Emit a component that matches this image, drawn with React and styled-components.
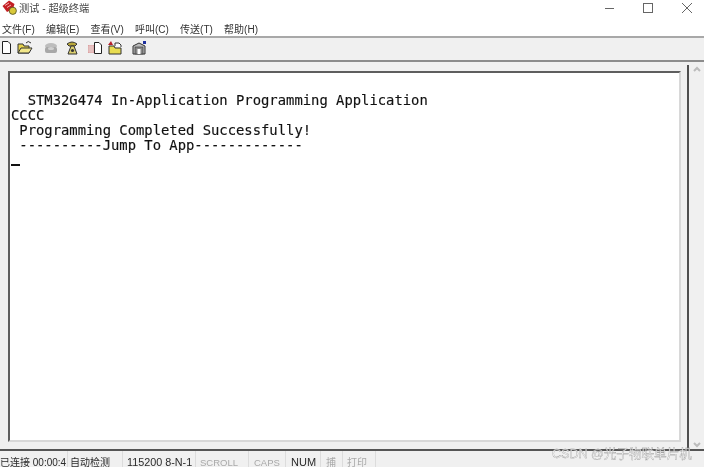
import React from "react";
import styled, { createGlobalStyle } from "styled-components";

const Global = createGlobalStyle`
  html, body { margin: 0; padding: 0; background: #f0f0f0; overflow: hidden; }
  #root { width: 704px; height: 467px; }
`;
const UI = `"Liberation Sans", "Noto Sans CJK SC", sans-serif`;

const Win = styled.div`
  position: relative; width: 704px; height: 467px; overflow: hidden;
  display: flex; flex-direction: column;
  background: #f0f0f0; font-family: ${UI}; color: #333;
  filter: blur(0.35px);
`;
const TitleBar = styled.div`
  height: 20px; flex: none; background: #fff; display: flex; align-items: center;
  padding-left: 2px; font-size: 10.2px; color: #444;
`;
const TitleText = styled.span`margin-left: 2px; margin-top: -5px;`;
const AppLogo = styled.svg`width: 15px; height: 15px; flex: none; margin-top: -5px;`;
const WinButtons = styled.div`
  margin-left: auto; display: flex; align-items: center; gap: 29px; padding-right: 12px; margin-top: -4px;
`;
const MenuBar = styled.div`
  height: 16px; flex: none; background: #fff; display: flex; align-items: center;
  padding-left: 2px; gap: 11.2px; font-size: 10px; color: #333;
  border-bottom: 2px solid #a8a8a8;
`;
const ToolBar = styled.div`
  height: 22px; flex: none; display: flex; align-items: center;
  border-bottom: 2px solid #8c8c8c; background: #f0f0f0;
`;
const Tool = styled.svg`
  width: 16px; height: 16px; flex: none; margin-left: ${p => p.$gap || 0}px; margin-bottom: 3px;
`;
const Middle = styled.div`
  flex: 1; min-height: 0; display: flex; background: #f0f0f0;
  border-bottom: 2px solid #555;
`;
const TermArea = styled.div`
  flex: 1; min-width: 0; padding: 6px 6px 7px 8px; border-right: 2px solid #4e4e4e; box-sizing: border-box;
  margin-top: 3px;
`;
const Terminal = styled.div`
  height: 100%; box-sizing: border-box; background: #fff;
  border: 2px solid #5e5e5e; border-right-color: #d8d8d8; border-bottom-color: #d8d8d8;
  padding: 20px 0 0 1px;
  font-family: "DejaVu Sans Mono", monospace; font-size: 13.85px; line-height: 15px; color: #111;
  -webkit-text-stroke: 0.15px #111;
  white-space: pre;
`;
const Line = styled.div`height: 15px;`;
const Cursor = styled.div`width: 9px; height: 2px; background: #111; margin-top: 11px;`;
const ScrollBar = styled.div`
  width: 15px; flex: none; display: flex; flex-direction: column; justify-content: space-between; align-items: center;
  padding: 4px 0 1px; background: #f0f0f0;
`;
const Chevron = styled.svg`width: 8px; height: 6px;`;
const StatusBar = styled.div`
  height: 16px; flex: none; display: flex; font-size: 10px; color: #333; background: #f0f0f0;
  white-space: nowrap;
`;
const Cell = styled.div`
  width: ${p => p.$w}px; flex: none; box-sizing: border-box;
  padding: 7px 0 0 ${p => p.$pad ?? 4}px; line-height: 9px; height: 16px;
  border-right: 1px solid #dcdcdc;
  font-size: ${p => p.$size || 10}px;
  color: ${p => (p.$off ? "#a9a9a9" : "#2a2a2a")};
`;
const Watermark = styled.div`
  position: absolute; left: 552px; top: 446px; font-size: 12.7px; line-height: 16px; color: rgba(255,255,255,0.85);
  -webkit-text-stroke: 0.3px #8a8a8a; white-space: nowrap; letter-spacing: -0.1px;
`;

const menus = ["文件(F)", "编辑(E)", "查看(V)", "呼叫(C)", "传送(T)", "帮助(H)"];

export default function App() {
  return (
    <Win>
      <Global />
      <TitleBar>
        <AppLogo viewBox="0 0 15 15">
          <path d="M0.5 6 L7 0.5 L12.5 4 L11 9 L5 12 Z" fill="#c41e24" />
          <path d="M3 5.5 L7 3 M5 7.5 L9 5" stroke="#f4b0b0" strokeWidth="1" />
          <circle cx="10.8" cy="10.8" r="3.6" fill="#d8c83a" stroke="#4a4a20" strokeWidth="0.8" />
        </AppLogo>
        <TitleText>测试 - 超级终端</TitleText>
        <WinButtons>
          <svg width="9" height="9" viewBox="0 0 9 9"><path d="M0 4.5H9" stroke="#666" /></svg>
          <svg width="10" height="10" viewBox="0 0 10 10"><rect x=".5" y=".5" width="9" height="9" fill="none" stroke="#666" /></svg>
          <svg width="10" height="10" viewBox="0 0 10 10"><path d="M0 0L10 10M10 0L0 10" stroke="#666" /></svg>
        </WinButtons>
      </TitleBar>
      <MenuBar>{menus.map(m => <span key={m}>{m}</span>)}</MenuBar>
      <ToolBar>
        <Tool viewBox="0 0 16 16"><path d="M2.5 1.5H8L10.5 4V13.5H2.5Z" fill="#fff" stroke="#222" /></Tool>
        <Tool viewBox="0 0 16 16" $gap={1}><path d="M1 13V4H6L7 6H12V13Z" fill="#e6d24c" stroke="#333" /><path d="M1 13L4 8H15L12 13Z" fill="#f2e78a" stroke="#333" /><path d="M9 3Q11 0 14 3" fill="none" stroke="#333" /></Tool>
        <Tool viewBox="0 0 16 16" $gap={10}><ellipse cx="8" cy="6" rx="6" ry="3" fill="#bdbdbd" /><rect x="2" y="7" width="12" height="6" rx="2" fill="#a8a8a8" /><ellipse cx="8" cy="8.5" rx="3" ry="1.5" fill="#d0d0d0" /></Tool>
        <Tool viewBox="0 0 16 16" $gap={5}><path d="M3 4Q8 0 13 4L11 6H5Z" fill="#b9a73a" stroke="#333" /><path d="M7 6L4 14H13L10 6Z" fill="#dcd070" stroke="#333" /><circle cx="8.5" cy="10.5" r="1.6" fill="#333" /></Tool>
        <Tool viewBox="0 0 16 16" $gap={7}><path d="M1 5H7V13H1Z" fill="#dba0a0" /><path d="M1 7H7M1 9H7M1 11H7M3 5V13M5 5V13" stroke="#f0e0e0" strokeWidth=".6" /><path d="M7.5 2.5H12L14.5 5V13.5H7.5Z" fill="#fff" stroke="#222" /></Tool>
        <Tool viewBox="0 0 16 16" $gap={4}><path d="M1 5L4 1L6 5Z" fill="#b8202a" /><path d="M2 14V6H7L8 8H14V14Z" fill="#e8dc50" stroke="#333" /><path d="M8 6V3H12L14 5V7" fill="#fff" stroke="#333" /></Tool>
        <Tool viewBox="0 0 16 16" $gap={8}><path d="M2 6L8 3L14 6V14H2Z" fill="#bbb" stroke="#333" /><rect x="4" y="7" width="8" height="7" fill="#888" stroke="#333" strokeWidth=".6" /><rect x="6.5" y="9" width="3" height="5" fill="#fff" /><rect x="12" y="1" width="3" height="3" fill="#1e2f9e" /></Tool>
      </ToolBar>
      <Middle>
        <TermArea>
          <Terminal>
            <Line>{"  STM32G474 In-Application Programming Application"}</Line>
            <Line>CCCC</Line>
            <Line>{" Programming Completed Successfully!"}</Line>
            <Line>{" ----------Jump To App-------------"}</Line>
            <Cursor />
          </Terminal>
        </TermArea>
        <ScrollBar>
          <Chevron viewBox="0 0 8 6"><path d="M1 5L4 2L7 5" fill="none" stroke="#bcbcbc" strokeWidth="2" /></Chevron>
          <Chevron viewBox="0 0 8 6"><path d="M1 1L4 4L7 1" fill="none" stroke="#bcbcbc" strokeWidth="2" /></Chevron>
        </ScrollBar>
      </Middle>
      <StatusBar>
        <Cell $w={68} $pad={0}>已连接 00:00:4</Cell>
        <Cell $w={55} $pad={2}>自动检测</Cell>
        <Cell $w={73} $size={10.8}>115200 8-N-1</Cell>
        <Cell $w={53} $size={9.5} $off>SCROLL</Cell>
        <Cell $w={37} $size={9.5} $pad={5} $off>CAPS</Cell>
        <Cell $w={35} $size={11} $pad={5}>NUM</Cell>
        <Cell $w={22} $pad={5} $off>捕</Cell>
        <Cell $w={33} $off>打印</Cell>
      </StatusBar>
      <Watermark>CSDN @光子物联单片机</Watermark>
    </Win>
  );
}
